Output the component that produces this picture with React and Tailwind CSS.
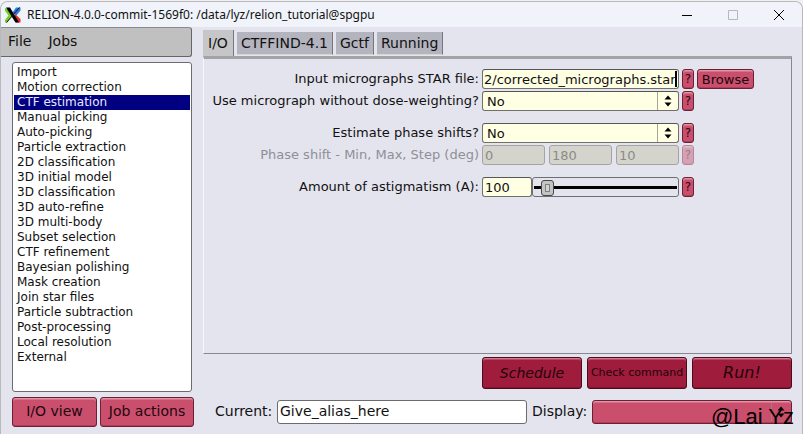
import { useState } from "react";

const jobTypes = [
  "Import",
  "Motion correction",
  "CTF estimation",
  "Manual picking",
  "Auto-picking",
  "Particle extraction",
  "2D classification",
  "3D initial model",
  "3D classification",
  "3D auto-refine",
  "3D multi-body",
  "Subset selection",
  "CTF refinement",
  "Bayesian polishing",
  "Mask creation",
  "Join star files",
  "Particle subtraction",
  "Post-processing",
  "Local resolution",
  "External",
];

const tabs = ["CTFFIND-4.1", "Gctf", "Running"];

const field = "h-5 min-w-0 w-full rounded-[3px] border border-[#6f6f6b] border-t-[#55555a] bg-[#ffffe4] text-[13px] text-[#111] outline-none";
const pink = "rounded-[3px] border border-[#6d1f35] bg-[#c94f6d] text-[#24060e] shadow-[inset_0_1px_0_#e294a7,inset_0_2px_0_#d4728a,inset_0_-1px_0_#b03d5a]";
const red = "h-8 rounded-[3px] border border-[#4d0c1c] bg-[#a01c3c] text-[#22030b] shadow-[inset_0_1px_0_#cf7c90,inset_0_2px_0_#b64a64,inset_0_-1px_0_#86142f]";

function Arrows({ className }) {
  return (
    <svg viewBox="0 0 8 12" className={className} fill="#000" aria-hidden="true">
      <path d="M4 0.5 7.5 4.5H0.5ZM4 11.5 0.5 7.5H7.5Z" />
    </svg>
  );
}

function Help({ disabled }) {
  return (
    <button
      type="button"
      disabled={disabled}
      aria-label="Help"
      className={`${pink} h-5 w-3 text-xs leading-none disabled:opacity-45`}
    >
      ?
    </button>
  );
}

function YesNo({ id }) {
  return (
    <div className="relative">
      <select id={id} defaultValue="No" className={`${field} block appearance-none pl-1`}>
        <option>No</option>
        <option>Yes</option>
      </select>
      <span className="pointer-events-none absolute inset-y-px right-[21px] w-px bg-[#a5a598]" />
      <Arrows className="pointer-events-none absolute top-1 right-[7px] h-3 w-2" />
    </div>
  );
}

function Row({ id, label, disabled, children, extra }) {
  return (
    <div className="grid grid-cols-[276px_197px_12px_57px] items-center gap-x-[3px]">
      <label htmlFor={id} className={`text-right leading-5 whitespace-nowrap ${disabled ? "text-[#8f8f96]" : ""}`}>
        {label}
      </label>
      {children}
      <Help disabled={disabled} />
      {extra}
    </div>
  );
}

export default function App() {
  const [job, setJob] = useState("CTF estimation");
  const [astigmatism, setAstigmatism] = useState(100);

  return (
    <div className="flex min-h-screen flex-col bg-[#f1f1f1] pt-px">
      <div className="relative flex flex-1 flex-col overflow-hidden rounded-t-lg border border-b-0 border-[#b9b9bd] bg-[#e4e4ee] font-['DejaVu_Sans',sans-serif] text-[13px] text-[#111]">
        <header className="flex h-[25px] flex-none items-center bg-[#f0f4fa] pl-1 font-['Noto_Sans',sans-serif] text-xs">
          <svg viewBox="0 0 16 16" className="mr-1.5 h-4 w-4" aria-hidden="true">
            <path d="M11 0.5H15.5V3.5L11 9 7.5 5.5Z" fill="#2f7be0" />
            <path d="M0 1 3.5 2.5 7 8.5 2.5 15.5H0V13L3.5 8.5 0 4Z" fill="#74d02c" />
            <path d="M7.5 10.5 10.5 7.5 15.5 12V15.5H11Z" fill="#dd3426" />
            <path d="M1 0.5H5L14 15.5H10.5Z" fill="#000" />
            <path d="M14.5 0.5 1.5 15.5" stroke="#111" strokeWidth="1" />
          </svg>
          <h1 className="flex-1 whitespace-nowrap">RELION-4.0.0-commit-1569f0: /data/lyz/relion_tutorial@spgpu</h1>
          <div className="flex gap-[26px] pr-[13px]">
            <button type="button" aria-label="Minimize" className="h-5 w-5">
              <svg viewBox="0 0 20 20" stroke="#000"><path d="M5 10.5H15" /></svg>
            </button>
            <button type="button" aria-label="Maximize" className="h-5 w-5">
              <svg viewBox="0 0 20 20" fill="none" stroke="#b4b7bd"><path d="M5.5 5.5H14.5V14.5H5.5Z" /></svg>
            </button>
            <button type="button" aria-label="Close" className="h-5 w-5">
              <svg viewBox="0 0 20 20" stroke="#000"><path d="M5 5 15 15M15 5 5 15" /></svg>
            </button>
          </div>
        </header>

        <div className="flex flex-1">
          <aside className="flex w-[193px] flex-none flex-col">
            <nav className="mr-0.5 flex h-[30px] items-center gap-[17px] rounded-r-[3px] border border-l-0 border-[#66666a] border-t-[#8a8a8e] bg-[#c0c0c0] pb-0.5 pl-[7px] text-sm">
              <button type="button">File</button>
              <button type="button">Jobs</button>
            </nav>
            <ul className="mt-[5px] mr-0.5 ml-[11px] flex-1 rounded-[3px] border border-[#6c6c70] bg-white px-px pt-0.5 text-xs">
              {jobTypes.map((name) => (
                <li key={name}>
                  <button
                    type="button"
                    onClick={() => setJob(name)}
                    className={`block h-[15px] w-full pl-[3px] text-left leading-[15px] ${name === job ? "bg-[#000080] text-[#e8e8ff]" : ""}`}
                  >
                    {name}
                  </button>
                </li>
              ))}
            </ul>
            <div className="mt-[5px] mb-[7px] ml-[11px] flex gap-[3px] text-sm whitespace-nowrap">
              <button type="button" className={`${pink} h-[30px] w-[85px] pb-0.5`}>I/O view</button>
              <button type="button" className={`${pink} h-[30px] flex-1 pb-0.5`}>Job actions</button>
            </div>
          </aside>

          <main className="mr-[10px] ml-[9px] flex min-w-0 flex-1 flex-col pt-[3px]">
            <div className="flex gap-[3px] text-sm">
              <button type="button" className="h-[26px] border-r border-[#77777b] bg-[#c6c6c8] px-[5px]">I/O</button>
              {tabs.map((tab) => (
                <button
                  type="button"
                  key={tab}
                  className="mt-0.5 h-[23px] border-r border-b border-r-[#77777b] border-b-[#d4d4dc] bg-[#b4b4be] px-1"
                >
                  {tab}
                </button>
              ))}
            </div>

            <form className="flex flex-1 flex-col border-t-[3px] border-r border-b border-l border-t-[#a3a3a6] border-r-[#88888e] border-b-[#88888e] border-l-[#f8f8fc] pt-[10px]">
              <div className="-ml-px flex flex-col gap-0.5">
                <Row
                  id="star"
                  label="Input micrographs STAR file:"
                  extra={<button type="button" className={`${pink} h-5 leading-none`}>Browse</button>}
                >
                  <div className="relative">
                    <input id="star" defaultValue="2/corrected_micrographs.star" className={`${field} block pl-px`} />
                    <span className="absolute top-0.5 right-0.5 h-4 w-0.5 bg-black" />
                  </div>
                </Row>
                <Row id="noDw" label="Use micrograph without dose-weighting?">
                  <YesNo id="noDw" />
                </Row>
                <div className="h-2" />
                <Row id="phase" label="Estimate phase shifts?">
                  <YesNo id="phase" />
                </Row>
                <Row id="phaseMin" label="Phase shift - Min, Max, Step (deg)" disabled>
                  <div className="grid grid-cols-3 gap-1">
                    {["0", "180", "10"].map((value, i) => (
                      <input
                        key={value}
                        id={i === 0 ? "phaseMin" : undefined}
                        aria-label={["Phase shift min", "Phase shift max", "Phase shift step"][i]}
                        defaultValue={value}
                        disabled
                        className="h-5 w-full min-w-0 rounded-[3px] border border-[#a4a4a4] bg-[#d4d4cc] pl-0.5 text-[13px] text-[#8b8b87]"
                      />
                    ))}
                  </div>
                </Row>
                <div className="h-2" />
                <Row id="astig" label="Amount of astigmatism (A):">
                  <div className="flex">
                    <input
                      id="astig"
                      value={astigmatism}
                      onChange={(e) => setAstigmatism(e.target.value)}
                      className={`${field} max-w-[50px] pl-0.5`}
                    />
                    <div className="flex h-5 min-w-0 flex-1 items-center rounded-[3px] border border-[#6f6f73] px-px">
                      <input
                        type="range"
                        min="0"
                        max="2000"
                        aria-label="Amount of astigmatism"
                        value={astigmatism}
                        onChange={(e) => setAstigmatism(e.target.value)}
                        className="h-4 w-full min-w-0 appearance-none bg-transparent [&::-webkit-slider-runnable-track]:h-[3px] [&::-webkit-slider-runnable-track]:bg-black [&::-webkit-slider-thumb]:-mt-[6px] [&::-webkit-slider-thumb]:h-4 [&::-webkit-slider-thumb]:w-[13px] [&::-webkit-slider-thumb]:appearance-none [&::-webkit-slider-thumb]:rounded-[3px] [&::-webkit-slider-thumb]:border [&::-webkit-slider-thumb]:border-[#4a4a4a] [&::-webkit-slider-thumb]:bg-[#d2d2d2] [&::-webkit-slider-thumb]:shadow-[inset_0_0_0_3px_#c4c4c4,inset_0_0_0_4px_#808080]"
                      />
                    </div>
                  </div>
                </Row>
              </div>
            </form>

            <div className="mt-[3px] ml-[279px] grid h-8 grid-cols-3 gap-[5px] whitespace-nowrap">
              <button type="button" className={`${red} text-sm italic`}>Schedule</button>
              <button type="button" className={`${red} text-[11px]`}>Check command</button>
              <button type="button" className={`${red} text-base italic`}>Run!</button>
            </div>

            <div className="mt-[11px] mb-[10px] flex items-center text-sm">
              <label htmlFor="alias" className="ml-3 w-[62px] pb-0.5">Current:</label>
              <input
                id="alias"
                defaultValue="Give_alias_here"
                className="h-6 min-w-0 flex-1 rounded-[3px] border border-[#6c6c70] bg-white pb-0.5 pl-0.5 outline-none"
              />
              <label htmlFor="display" className="ml-[5px] w-[60px] pb-0.5">Display:</label>
              <div className="relative w-[200px]">
                <select id="display" className={`${pink} block h-6 w-full appearance-none`} />
                <span className="pointer-events-none absolute inset-y-[3px] right-5 w-px bg-[#a87585]" />
                <Arrows className="pointer-events-none absolute top-1.5 right-[7px] h-3 w-2" />
              </div>
            </div>
          </main>
        </div>

        <p className="pointer-events-none absolute right-2 bottom-[3px] font-['Liberation_Sans',sans-serif] text-[22px] leading-7 text-black">@Lai Yz</p>
      </div>
    </div>
  );
}
